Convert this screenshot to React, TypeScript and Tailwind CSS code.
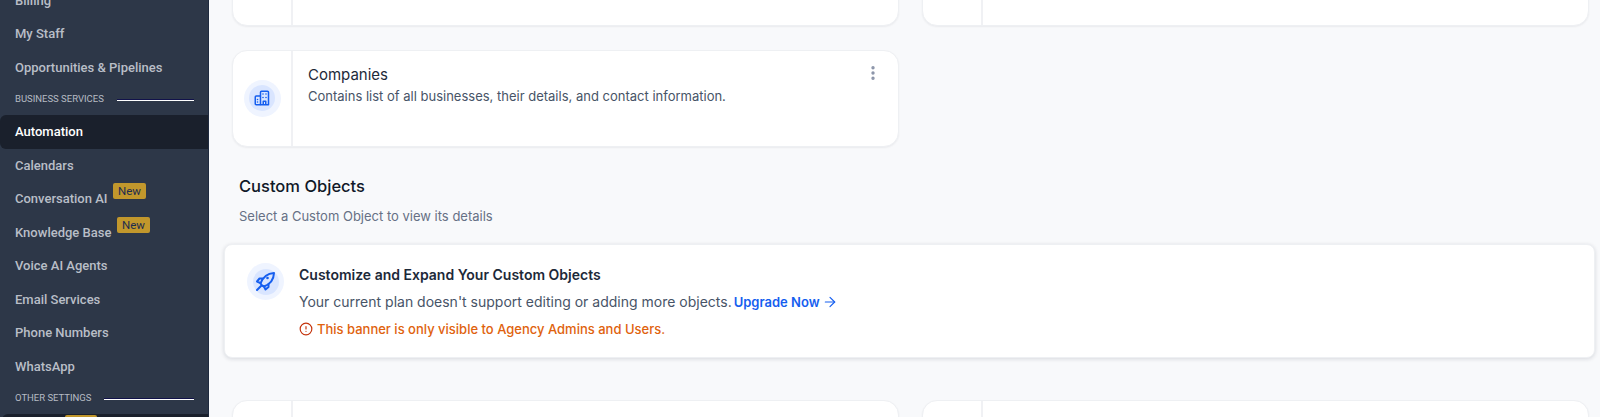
import { ArrowRight, CircleAlert, EllipsisVertical } from 'lucide-react';

function BuildingIcon() {
  return (
    <svg className="h-[16px] w-[16px] text-[#155eef]" viewBox="0 0 16 16" fill="none" stroke="currentColor" strokeWidth="1.5" strokeLinejoin="round">
      <path d="M6.5 14.75V2.25a1 1 0 0 1 1-1h6a1 1 0 0 1 1 1v12.5z" />
      <path d="M6.5 6H2.25a1 1 0 0 0-1 1v6.75a1 1 0 0 0 1 1H6.5" />
      <path d="M9.25 14.75v-3.5h2.5v3.5" />
      <path d="M9 4h.01M12 4h.01M9 7.5h.01M12 7.5h.01M3.5 9.5h.01M3.5 12h.01" strokeWidth="1.6" strokeLinecap="round" />
    </svg>
  );
}

function RocketIcon() {
  return (
    <svg className="h-[21px] w-[21px] text-[#155eef]" viewBox="0 0 21 21" fill="none" stroke="currentColor" strokeWidth="2" strokeLinecap="round" strokeLinejoin="round">
      <path d="M7 14.5 5.5 12.5C7.5 7 12 2.5 19 2c-.3 7-4.700 11.500-10 13.500z" />
      <path d="M7.500 7.500H4.500L2 10.500l3.500 1.500" />
      <path d="M13.500 13v3l-3 2.500-1.500-3" />
      <path d="M12.500 7h.01" strokeWidth="2.600" />
      <path d="M2 19l4-4" />
    </svg>
  );
}

function NavItem({ label, active, badge }: { label: string, active?: boolean, badge?: boolean }) {
  return (
    <div className={`flex h-[33.5px] shrink-0 items-center rounded-l-md pl-[15px] font-['Roboto',sans-serif] text-[13px] font-medium ${active ? 'bg-[#1a202c] text-white' : 'text-[#b9bec7]'}`}>
      <span>{label}</span>
      {badge && (
        <span className="mb-[15px] ml-[5.5px] rounded-[2px] bg-[#c1972c] px-[5px] text-[11.5px] leading-[16px] font-normal text-[#1d2c4f]">New</span>
      )}
    </div>
  );
}

function NavHeading({ label, lineWidth }: { label: string, lineWidth: string }) {
  return (
    <div className="flex h-[31px] shrink-0 items-center justify-between pr-[14px] pl-[15px] font-['Roboto',sans-serif] text-[9.5px] text-[#b6bbc4]">
      <span>{label}</span>
      <span className={`h-[2px] border-b border-white bg-[#11124a] ${lineWidth}`}></span>
    </div>
  );
}

function IconCircle({ children }: { children: React.ReactNode }) {
  return (
    <span className="flex h-[37px] w-[37px] shrink-0 items-center justify-center rounded-full bg-[#eff4ff]">
      <span className="flex h-[26px] w-[26px] items-center justify-center rounded-full bg-[#d9e5ff]">{children}</span>
    </span>
  );
}

function Card({ children }: { children?: React.ReactNode }) {
  return (
    <div className="flex h-[97px] w-[667px] shrink-0 rounded-[15px] border border-[#eef0f3] bg-white shadow-[0_1px_2px_rgba(16,24,40,0.06)]">
      <div className="flex w-[60px] shrink-0 items-center justify-center border-r-2 border-[#f0f1f4]">
        {children && <IconCircle><BuildingIcon /></IconCircle>}
      </div>
      {children}
    </div>
  );
}

export default function App() {
  return (
    <div className="flex h-[417px] w-[1600px] overflow-hidden bg-[#f8f9fb] font-['Inter',sans-serif]">
      <aside className="flex w-[209px] shrink-0 flex-col overflow-hidden border-r border-[#1f2a3f] bg-[#2d3748]">
        <div className="-mt-[16.5px] flex flex-col">
          <NavItem label="Billing" />
          <NavItem label="My Staff" />
          <NavItem label="Opportunities & Pipelines" />
          <NavHeading label="BUSINESS SERVICES" lineWidth="w-[77px]" />
          <NavItem label="Automation" active />
          <NavItem label="Calendars" />
          <NavItem label="Conversation AI" badge />
          <NavItem label="Knowledge Base" badge />
          <NavItem label="Voice AI Agents" />
          <NavItem label="Email Services" />
          <NavItem label="Phone Numbers" />
          <NavItem label="WhatsApp" />
          <NavHeading label="OTHER SETTINGS" lineWidth="w-[90px]" />
          <div className="ml-[2px] h-[33.5px] rounded-l-md bg-[#1a202c] pt-[1px] pl-[63px]">
            <div className="h-[16px] w-[32px] rounded-[2px] bg-[#c1972c]"></div>
          </div>
        </div>
      </aside>

      <main className="min-w-0 flex-1 overflow-hidden">
        <div className="-mt-[71.5px] flex gap-[23px] pl-[23px]">
          <Card />
          <Card />
        </div>
        <div className="mt-[24px] pl-[23px]">
          <Card>
            <div className="flex min-w-0 flex-1 items-start justify-between pt-[14.5px] pr-[16px] pl-[15px]">
              <div>
                <div className="text-[15px] leading-[20px] font-normal text-[#1d2939]">Companies</div>
                <div className="mt-[1px] text-[13px] leading-[20px] text-[#475467]">Contains list of all businesses, their details, and contact information.</div>
              </div>
              <EllipsisVertical className="-mt-[1px] h-[18px] w-[18px] text-[#8a93a8]" strokeWidth={2.5} />
            </div>
          </Card>
        </div>
        <h2 className="mt-[27.5px] pl-[30px] text-[16.5px] leading-[24px] font-medium text-[#101828]">Custom Objects</h2>
        <p className="mt-[8px] pl-[30px] text-[13px] leading-[20px] text-[#667085]">Select a Custom Object to view its details</p>
        <section className="mt-[18px] ml-[15px] flex h-[114px] w-[1371px] rounded-[8px] border border-[#eef0f3] bg-white pt-[18px] pl-[22px] shadow-[0_1px_4px_rgba(16,24,40,0.14)]">
          <IconCircle><RocketIcon /></IconCircle>
          <div className="mt-[2px] ml-[15px]">
            <div className="text-[14px] leading-[20px] font-semibold text-[#1d2939]">Customize and Expand Your Custom Objects</div>
            <div className="mt-[7px] flex items-center text-[14px] leading-[20px] text-[#475467]">
              <span>Your current plan doesn't support editing or adding more objects.</span>
              <span className="ml-[2px] text-[13px] font-semibold text-[#155eef]">Upgrade Now</span>
              <ArrowRight className="ml-[2px] h-[16px] w-[16px] text-[#155eef]" strokeWidth={1.75} />
            </div>
            <div className="mt-[7px] flex items-center text-[13px] leading-[20px] font-medium text-[#e0620d]">
              <CircleAlert className="mr-[4px] h-[14px] w-[14px] text-[#c4320a]" strokeWidth={2} />
              <span>This banner is only visible to Agency Admins and Users.</span>
            </div>
          </div>
        </section>
        <div className="mt-[42px] flex gap-[23px] pl-[23px]">
          <Card />
          <Card />
        </div>
      </main>
    </div>
  );
}
